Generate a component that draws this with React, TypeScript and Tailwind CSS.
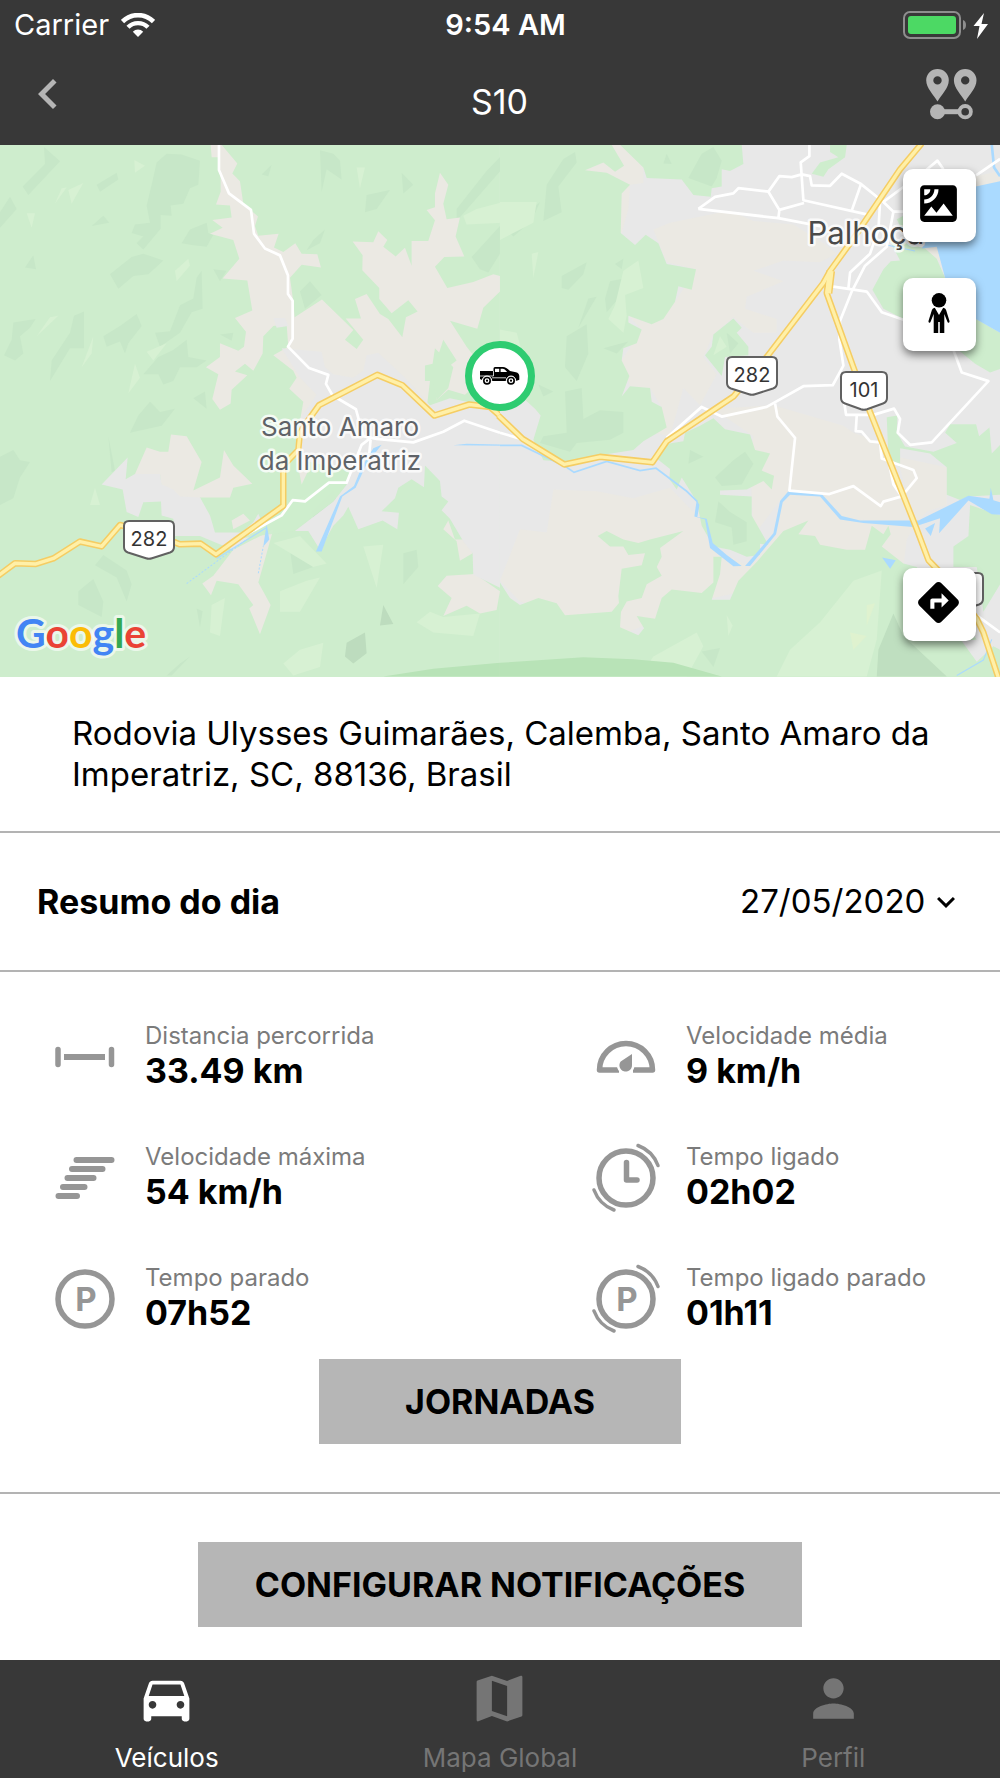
import React from 'react'
import {
  MdChevronLeft,
  MdDirections,
  MdDirectionsCar,
  MdExpandMore,
  MdMap,
  MdPerson,
  MdSatellite,
} from 'react-icons/md'

const FOREST = '#ceedcd'
const RURAL = '#ebe9e3'
const URBAN = '#e8e8e8'
const WATER = '#aadaff'

function StatusBar() {
  return (
    <div className="grid h-12 grid-cols-3 items-center pt-0.5 pr-[11px] pl-[14px] text-[29px] leading-[34px]">
      <div className="flex items-center gap-3">
        <span>Carrier</span>
        <svg className="h-6 w-[34px]" viewBox="0 0 34 24" fill="none" stroke="#fff">
          <path d="M1.5 8.5a22 22 0 0 1 31 0" strokeWidth="4.6" />
          <path d="M7 14.2a14.2 14.2 0 0 1 20 0" strokeWidth="4.4" />
          <path d="M17 24l-5.2-5.3a7.4 7.4 0 0 1 10.4 0z" fill="#fff" stroke="none" />
        </svg>
      </div>
      <span className="pl-2 text-center font-semibold">9:54 AM</span>
      <svg className="h-7 w-[86px] justify-self-end" viewBox="0 0 86 28">
        <rect x="1" y="1" width="56" height="26" rx="6" fill="none" stroke="#8e8e8e" strokeWidth="2" />
        <rect x="5" y="5" width="48" height="18" rx="3" fill="#4cd964" />
        <path d="M60 9q3 1 3 5t-3 5z" fill="#8e8e8e" />
        <path d="M81 2 70.500 15h6L74 28 85 13h-6.500z" fill="#fff" />
      </svg>
    </div>
  )
}

function Header() {
  return (
    <header className="bg-[#383838] text-white">
      <StatusBar />
      <div className="grid h-[97px] grid-cols-3 items-start pr-[23px] pl-[22px] pt-4">
        <button type="button" aria-label="Voltar" className="-ml-1 justify-self-start text-[#b5b5b5]">
          <MdChevronLeft size={60} />
        </button>
        <h1 className="pt-[17px] text-center text-[34px] leading-[41px]">S10</h1>
        <button type="button" aria-label="Trajetos" className="justify-self-end pt-[5px]">
          <svg className="h-[51px] w-[51px]" viewBox="0 0 51 51" fill="#b5b5b5">
            <path fillRule="evenodd" d="M11.500 0a11.300 11.300 0 0 1 11.300 11.300c0 8-7.500 14.500-11.300 21.200C7.700 25.800.2 19.300.2 11.300A11.300 11.300 0 0 1 11.500 0zm0 7.200a4.200 4.200 0 1 0 0 8.400 4.200 4.200 0 0 0 0-8.400z" />
            <path fillRule="evenodd" d="M39.200 0a11.300 11.300 0 0 1 11.300 11.300c0 8-7.500 14.500-11.300 21.200-3.800-6.700-11.300-13.200-11.300-21.200A11.300 11.300 0 0 1 39.200 0zm0 7.200a4.200 4.200 0 1 0 0 8.400 4.200 4.200 0 0 0 0-8.400z" />
            <circle cx="11.500" cy="42.700" r="7.500" />
            <path d="M15 40.200h18v5H15z" />
            <circle cx="39.200" cy="42.700" r="5.700" fill="none" stroke="#b5b5b5" strokeWidth="3.800" />
          </svg>
        </button>
      </div>
    </header>
  )
}

function Shield({ x, y, width = 52, label }: { x: number; y: number; width?: number; label: string }) {
  const half = width / 2
  return (
    <g transform={`translate(${x} ${y})`}>
      <path
        d={`M${6 - half} 1H${half - 6}q5 0 5 5V27q0 4-4 5.500L3 38.300Q0 39.300-3 38.300L${5 - half} 32.500q-4-1.500-4-5.500V6q0-5 5-5z`}
        fill="#fff"
        stroke="#616161"
        strokeWidth="2"
      />
      <text y="26" textAnchor="middle" fontSize="20" fill="#333">{label}</text>
    </g>
  )
}

function WestTerrain() {
  return (
    <g transform="translate(0 -5) scale(0.3333 0.3444)">
      <path fill={FOREST} d="M0 14H1500V1560H0z" />
      <g fill="#c7e7c8">
        <path d="M470 65 500 40 545 42 600 60 595 130 570 140 550 185 512 190 515 220 482 218 482 258 430 318 410 300 430 280 395 270 405 245 450 240 440 190 455 130z" />
        <path d="M330 390 395 340 430 330 490 350 445 390 400 395 355 432z" />
        <path d="M132 20 180 62 85 160 68 135 135 70zM30 165 50 200 0 255V210zM290 130 350 95 355 115 300 150z" />
        <path d="M545 300 570 260 620 240 625 270 640 275 620 310 575 305zM605 380 608 490 575 500 540 560 480 600 465 560 510 555 540 480 580 460 590 400z" />
        <path d="M222 510 252 498V605H210L150 700 155 640 210 560zM40 530 107 520 90 545 60 570 70 620 45 640 12 625 35 580z" />
        <path d="M310 570 360 540 410 505 425 540 385 590 375 620 360 585 320 600zM475 630 520 610 560 580 565 630 620 640 590 660 540 660 520 700 490 710 475 680 430 680z" />
        <path d="M415 800 450 760 480 790 525 780 485 830 390 850zM580 750 615 730 620 780zM325 860 345 960 335 965z" />
        <path d="M0 920 40 900 60 930 90 935 60 980 40 1040 0 1060zM75 370 100 335 108 375zM275 250 310 220 328 240z" />
        <path d="M785 100 815 72 805 105zM960 30 1000 40 1020 60 1025 115 980 85 965 150zM1100 160 1170 145 1130 200 1095 210zM1205 95 1240 130 1210 155z" />
        <path d="M1370 200 1460 90 1510 40V80L1420 180 1370 235zM940 290 975 260 960 300 920 320zM1415 340 1500 250V330L1465 385 1440 375z" />
        <path d="M935 1080 1000 1020 1015 1060 950 1130zM310 1205 380 1250 395 1290 380 1340 350 1270 285 1235zM235 1310 280 1275 310 1340 305 1385 235 1350z" />
        <path d="M870 1190 940 1240 880 1260zM1210 1200 1250 1190 1255 1240 1210 1290zM590 1360 608 1368 600 1415zM540 1520 570 1500 515 1555H500zM660 565 700 560 695 583z" />
        <path d="M900 440 930 410 965 450 915 490zM640 375 680 380 660 410z" />
      </g>
      <g fill="#d7f1d3">
        <path d="M165 185 185 140 200 138zM80 213H105L95 255zM403 58 435 75 405 95zM205 145 250 125 235 150 215 185zM245 660 280 570 275 620zM525 380 565 345 570 365 530 410z" />
        <path d="M150 515 175 510 110 570zM440 615 500 590 460 640zM405 650 420 690 385 735zM1070 80H1095L1080 140zM1390 220 1430 200 1510 180V240L1400 245z" />
        <path d="M840 1310 920 1280 960 1270 900 1370H840zM820 1170 900 1150 980 1230 940 1240zM1250 1400 1290 1370 1330 1385 1440 1375 1420 1440 1300 1430z" />
        <path d="M900 1480 970 1460 960 1530 880 1555 850 1520zM1090 1180 1150 1175 1130 1300zM285 1010 300 1060H270zM635 1350 675 1330 660 1440 630 1430z" />
      </g>
      <path fill="#bddcbe" d="M1150 1350 1180 1405 1140 1410zM1040 1460 1095 1430 1100 1490 1060 1520 1035 1500z" />
      <g fill={RURAL}>
        <path d="M632 14H665L712 68 697 97 720 120 730 185 774 222 765 250 775 278 836 272 822 312 850 325 886 300 905 330 952 332 963 370 905 362 870 400 880 470 884 515 966 463 1060 552 1035 580 1070 607 1090 580 1037 518H1083L1065 462 1100 447 1140 505 1165 520 1207 573 1218 515 1253 498 1225 465 1175 503 1138 462V430L1087 378 1088 335 1058 295 1120 297 1135 265 1162 290 1150 310 1187 338 1215 313 1235 365V293H1285L1305 233 1280 203 1305 195V155L1320 95 1345 130 1330 185 1340 230 1380 225 1367 280 1393 338 1333 340 1305 368 1342 430 1420 412 1480 390 1500 395V440L1450 487 1432 548 1350 525 1400 600 1440 650V700L1395 740 1345 725 1310 755 1305 700H1275V655L1298 650V603L1350 655 1370 640 1330 580 1290 700 1280 780 920 790 905 850 925 960 905 1000 885 900 910 760 868 722 890 690 880 670 820 625 865 600 860 535 820 540 790 570 788 620 760 670 735 650 705 672 742 683 695 725 692 765 660 783 637 752 655 680 618 660 660 630V590L715 612 732 600 738 557 705 517 757 495 742 408 668 402 718 345 700 290 630 272 668 255 637 232 695 225 690 190 648 187 662 150V110L655 50 635 50z" />
        <path d="M440 893 480 905H505L513 855 560 860 605 935 580 1018 660 980 672 900 700 945 757 998 700 1010 690 1038H600L625 1095 560 1110 490 1050 480 970 405 970z" />
        <path d="M700 1190 820 1130 800 1200 775 1285 812 1350 780 1435 748 1360 760 1350 715 1290 650 1280 633 1322 607 1288 640 1265zM695 1105 730 1085 750 1105 700 1130z" />
        <path d="M1345 1105 1365 1160 1400 1160 1418 1200 1380 1222 1370 1165 1330 1130zM1313 1295 1340 1265 1425 1260 1500 1310 1490 1365 1440 1375 1400 1352 1330 1382 1355 1330z" />
      </g>
      <path fill={FOREST} d="M1305 605 1360 660 1345 720 1310 755 1300 700H1275V655L1298 650z" />
      <g fill={URBAN}>
        <path d="M845 605 965 615 975 660 1000 680 1060 690 1090 670 1100 625 1135 618 1170 650 1215 690 1290 770 1350 750 1500 780V1300L1420 1262 1418 1200 1390 1165 1350 1100 1325 1075 1345 1050 1325 1035 1320 990 1275 945 1272 1008 1235 985 1195 1010 1185 1040 1145 1078 1197 1082 1192 1130 1148 1105 1075 1130 1045 1065 1030 1090 1000 1120 960 1190 925 1135 885 1135 1000 1050 1040 1000 1050 960 905 930 900 810 950 740 900 690z" />
        <path d="M383 922 377 985 405 970H480L485 1000 520 1015 540 1035 600 1038 630 1090 645 1140H725L760 1110 775 1085 790 1120 700 1190 650 1170 600 1150H525L520 1100 485 1090 483 1050 430 1052 415 1095 380 1080 368 1015 305 1000z" />
        <path d="M820 517H855L865 540 830 545z" />
      </g>
      <path fill={FOREST} d="M860 1060 1000 990 1040 1000 1000 1050 880 1135 700 1160 850 1080z" opacity=".9" />
      <path fill="#b8e3b7" d="M1150 1558 1300 1535 1500 1518V1558z" />
      <g fill={WATER}>
        <path d="M948 1195H965L1027 1035 1067 1010 1100 940 1145 885 1120 895 1085 950 1062 1005 1020 1035zM800 1115 808 1160 790 1180zM1360 886 1400 882 1500 884V888z" />
      </g>
      <g fill="none" stroke={WATER} strokeWidth="3">
        <path d="M560 1288 740 1160M775 1258 790 1180" strokeDasharray="6 5" />
        <path d="M650 1215 800 1125" />
      </g>
      <g fill="none" stroke="#fff" strokeWidth="8" strokeLinejoin="round">
        <path d="M657 14V87L687 155 753 203 762 272 795 315 840 335 864 393V447L878 467V577L864 600 927 662 985 682 978 708 998 742 1068 782 1090 860 1130 868 1240 878 1330 847 1393 815 1500 850" />
        <path d="M1112 865 1085 885 1040 995H987L915 1049 878 1046 845 1090 740 1145M1112 870 1108 910" />
      </g>
      <g fill="none" strokeLinejoin="round">
        <path stroke="#f5cd63" strokeWidth="19" d="M-5 1265 45 1229 108 1231 160 1215 240 1166 305 1180 360 1118 450 1140 540 1174 602 1172 648 1203 705 1163 850 1062V945L895 900 900 850 920 820 957 770 1132 682 1207 712 1303 800 1408 768 1470 775 1505 805" />
        <path stroke="#fff0a8" strokeWidth="10" d="M-5 1265 45 1229 108 1231 160 1215 240 1166 305 1180 360 1118 450 1140 540 1174 602 1172 648 1203 705 1163 850 1062V945L895 900 900 850 920 820 957 770 1132 682 1207 712 1303 800 1408 768 1470 775 1505 805" />
      </g>
    </g>
  )
}

function EastTerrain() {
  return (
    <g transform="translate(500 -5) scale(0.3334 0.3444)">
      <path fill={URBAN} d="M0 14H1500V1560H0z" />
      <g fill={RURAL}>
        <path d="M255 88 310 65 330 14 365 14 430 80 430 125 390 130 385 200 365 270z" />
        <path d="M460 260 510 240 690 205 760 235 880 245 970 300 1010 330 960 355 850 350 760 380 850 410 740 455 735 490 830 520V560H760L700 515 640 565 610 630 650 680 600 770 550 720 510 860 460 850 485 775 450 720 390 715 365 640 425 550 385 510 455 535 525 470 588 375 500 355z" />
        <path d="M160 1015 290 1020 400 1040 510 1010 600 1100 630 1180 740 1235 830 1140 845 1040 960 1035 1030 1100 1250 1110 1220 1160 1210 1240 1100 1230 640 1330 380 1430 190 1380 60 1340 0 1280 60 1130 140 1140z" />
        <path d="M640 780 820 770 1030 830 1060 850 1150 880 1200 1010 1300 1060 1250 1110 1030 1100 960 1035 845 1040 760 1150 750 930 760 860z" />
        <path d="M1427 105 1500 90V125L1427 135zM1265 320 1305 300 1325 355zM1190 920 1340 950V1060L1240 1090z" />
      </g>
      <g fill={FOREST}>
        <path d="M0 14H335L372 75 345 92 310 65 255 88 320 95 390 130 365 155 362 270 405 305 437 275 475 300 500 360 588 375 575 435 535 425 525 470 490 520 455 535 385 510V530L425 550 410 590 370 605 365 640 388 685 365 745 390 715 450 720 455 760 485 775 500 835 430 875 400 900 300 915 200 935 130 930 100 870 122 800 105 780 0 690z" />
        <path d="M360 14H725L730 70 690 90 665 85V135L635 140 632 165 580 160 545 115 440 110 430 80zM990 14H1040L1035 50 985 85 970 107 935 98 960 65 1015 50 990 35z" />
        <path d="M700 518 725 545 710 560 745 600V625L675 630 665 685 615 625 635 600 640 565z" />
        <path d="M640 808 675 840 750 855 765 900 810 910 785 960 822 975 815 1015 790 990 740 1015 660 1018V1030L755 1035V1090L805 1175 780 1172V1205L740 1210 690 1190 640 1180 605 1120 590 1050 545 980 530 1015 508 985 510 955 470 925 485 885 550 875 555 850 600 830z" />
        <path d="M1165 285 1275 315 1310 345 1335 400 1210 520 1150 490 1117 435 1150 375 1172 352 1200 350zM1190 230 1210 220V270zM1428 520 1500 560V665L1470 675 1425 650 1375 610z" />
        <path d="M1350 825H1428L1437 860 1468 835 1475 910 1500 885V1030L1405 1035 1380 1045 1340 1030V950L1290 910 1200 895V950L1165 920 1160 805 1192 800 1190 850 1215 890 1300 905 1370 880 1335 850z" />
        <path d="M1410 1060 1500 1090V1290L1450 1370 1430 1240H1360V1180L1405 1150z" />
        <path d="M293 1150 320 1135 370 1160 415 1170 450 1160 550 1135 480 1185 485 1210 470 1240 485 1265 440 1290 425 1330 380 1340 360 1375 355 1325 365 1245 425 1235 435 1200 385 1205 370 1180H330z" />
        <path d="M0 1285 30 1330 60 1350 115 1330 170 1345 195 1380 335 1370 365 1335 360 1415 415 1438 432 1418 410 1382 465 1390 485 1330 515 1305 605 1315 640 1285V1210H665L660 1260 635 1335H690L715 1280 770 1225 850 1135 925 1105 895 1145 945 1150 960 1175 1040 1190H1095L1115 1120 1150 1145 1165 1120 1172 1145 1145 1180 1210 1230 1250 1240 1430 1450 1385 1455 1430 1515 1480 1470 1500 1480V1560H0z" />
      </g>
      <g fill="#c7e7c8">
        <path d="M190 55 225 35 230 65 175 135 185 210 130 235 140 130zM20 260 120 180 95 235 40 280zM605 40 640 20 665 60 650 110 635 135 565 110z" />
        <path d="M185 395 260 355 250 390 205 435 185 430zM330 410 383 400 355 460 320 500 315 460zM265 460 290 455 235 545zM200 570 260 535 265 620 230 700 195 660z" />
        <path d="M310 605 385 585 350 620zM345 360 370 345 365 375zM500 40 515 70 490 68zM195 730 245 720 250 810 300 785 370 790V850L330 870 230 880 210 905 120 880 130 860 200 850z" />
        <path d="M115 710 160 730 130 745zM645 980 700 930 735 905 760 940 725 1000 665 1005zM570 900 610 920 565 940zM655 1050 690 1080 740 1110V1165L700 1175 695 1125 645 1110zM680 560 715 590 690 620z" />
        <path d="M605 1485 660 1475 640 1530z" />
      </g>
      <g fill="#d7f1d3">
        <path d="M370 380 415 350 430 430 375 450 380 510 370 560 325 520 345 480zM0 550 50 560 70 630 0 600zM0 180H110L100 240 0 290zM660 570 680 600 640 625z" />
        <path d="M870 1480 960 1400 1060 1280 1145 1250 1130 1450 1100 1558H830zM460 1500 590 1430 610 1470 560 1558H420zM95 330 115 325 100 400zM680 1380 698 1410 685 1440z" />
      </g>
      <path fill="#dff2cf" d="M1100 1350 1125 1345 1100 1410zM1050 1430 1100 1440 1060 1480z" />
      <path fill="#bfdfc0" d="M1180 1375 1210 1440 1340 1558H1130L1135 1480z" />
      <path fill="#b8e3b7" d="M0 1518 250 1502 400 1508 520 1518 665 1558H0z" />
      <g fill={WATER}>
        <path d="M1427 135 1500 120V560L1427 520 1335 400 1310 310 1265 315 1280 290zM1275 1128 1305 1112 1292 1150zM1146 1212 1187 1220 1170 1245z" />
        <path d="M590 1045 598 1060 592 1095 620 1100 638 1170 680 1205 725 1237 700 1238 630 1185 615 1102 583 1093z" />
        <path d="M735 1237H750L828 1145 848 1052 870 1030 960 1035 1020 1102 1090 1112 1240 1124 1320 1098 1317 1142 1405 1047 1475 1087 1500 1088V1052L1480 1046 1472 1010 1468 1042 1405 1033 1255 1105H1080L1025 1092 965 1028 865 1020 840 1048 820 1142z" />
      </g>
      <g fill="none" stroke={WATER} strokeWidth="5">
        <path d="M0 887H65L200 950 222 965 320 933 420 960 468 953 560 1020 592 1050" />
        <path d="M1370 1555 1450 1510 1475 1450M1160 305 1245 322" strokeWidth="3" />
        <path d="M1475 14 1482 80 1500 105" strokeWidth="8" />
      </g>
      <g fill="none" stroke="#fff" strokeWidth="8" strokeLinejoin="round">
        <path d="M928 14V47L902 65 910 175 1110 218M595 200 645 165 700 155 715 140 805 150 838 105 875 108 905 100 930 105 935 132 990 133 1025 98 1083 128 1150 180 1180 208H1215" />
        <path d="M595 200 835 227 838 203 805 150M838 203 912 183M835 227 960 250M1083 128 1055 205M1150 180 1275 90 1312 60 1330 85M1428 103 1500 55" />
        <path d="M1140 180 1135 260 1110 330 1050 385 1045 430M1180 208 1160 310 1095 365 1055 440 1020 525 1018 580 1030 655 998 712 910 715 800 775 665 803 605 775 500 865" />
        <path d="M995 425 1100 440 1145 500 1210 522 1360 610 1385 675 1465 700 1295 878 1230 885 1193 850 1200 810 1182 780 1120 798H1038L1032 760" />
        <path d="M1070 800 1067 845 1085 847 1110 875 1140 878 1145 925 1240 958 1250 982 1205 1035 1150 1050 1142 1063 1060 1005 988 1028 868 1018 885 865 832 803 825 765M1165 930 1180 1000 1205 1035" />
        <path d="M0 850 70 870M1430 1380 1500 1430" />
      </g>
      <g fill="none" strokeLinejoin="round">
        <g stroke="#f5cd63" strokeWidth="19">
          <path d="M-5 800 68 868 193 942 300 920 457 936 500 875 700 745 800 630 970 415 990 380 1050 300 1200 85 1265 10" />
          <path d="M990 380 980 445 1060 660 1110 790 1250 1130 1285 1220 1330 1265 1430 1390 1450 1430 1495 1562" />
          <path d="M992 380 984 445" strokeWidth="26" />
        </g>
        <g stroke="#fff0a8" strokeWidth="10">
          <path d="M-5 800 68 868 193 942 300 920 457 936 500 875 700 745 800 630 970 415 990 380 1050 300 1200 85 1265 10" />
          <path d="M990 380 980 445 1060 660 1110 790 1250 1130 1285 1220 1330 1265 1430 1390 1450 1430 1495 1562" />
          <path d="M992 380 984 445" strokeWidth="17" />
        </g>
      </g>
    </g>
  )
}

function VehicleMarker() {
  return (
    <g transform="translate(500 231)">
      <circle r="31.500" fill="#fff" stroke="#2ecc71" strokeWidth="7" />
      <path d="M-20-5h13.500v-2.500Q-6.500-9-5-9H3Q6-9 10-5l6 1.200q3.300.8 3.300 4v3.500L16 5H-16L-20 3z" />
      <path d="M-5-7.200h4.200V-4H-5zM.6-7.200H3q1.600 0 4.200 3.200H.6z" fill="#fff" />
      <path d="M-20 0h13.500v-5M-8 1.800H6" fill="none" stroke="#fff" strokeWidth=".8" />
      <g fill="#fff" stroke="#fff">
        <circle cx="-13" cy="4.700" r="4.700" />
        <circle cx="11" cy="4.700" r="4.700" />
      </g>
      <g fill="#fff" stroke="#000" strokeWidth="1.600">
        <circle cx="-13" cy="4.700" r="3.200" />
        <circle cx="11" cy="4.700" r="3.200" />
      </g>
      <circle cx="-13" cy="4.700" r="1.100" />
      <circle cx="11" cy="4.700" r="1.100" />
    </g>
  )
}

function MapButton({ label, children }: { label: string; children: React.ReactNode }) {
  return (
    <button
      type="button"
      aria-label={label}
      className="flex size-[73px] items-center justify-center rounded-[10px] bg-white pr-0.5 pb-1 text-black shadow-[0_4px_8px_rgba(0,0,0,0.5)]"
    >
      {children}
    </button>
  )
}

function VehicleMap() {
  return (
    <section className="relative h-[532px] overflow-hidden" aria-label="Mapa">
      <svg
        className="h-full w-full"
        viewBox="0 0 1000 532"
        preserveAspectRatio="xMidYMid slice"
        fontFamily="Inter, 'Liberation Sans', sans-serif"
      >
        <WestTerrain />
        <EastTerrain />
        <g stroke="#fff" strokeOpacity=".8" strokeWidth="5" strokeLinejoin="round" paintOrder="stroke" textAnchor="middle">
          <text x="340" y="291" fontSize="26" fill="#5f6368">Santo Amaro</text>
          <text x="340" y="325" fontSize="26" fill="#5f6368">da Imperatriz</text>
          <text x="866" y="99" fontSize="31" fill="#4a4a4a">Palhoça</text>
        </g>
        <Shield x={149} y={375} label="282" />
        <Shield x={752} y={211} label="282" />
        <Shield x={864} y={226} width={48} label="101" />
        <Shield x={958} y={427} label="" />
        <text
          x="16"
          y="503"
          fontSize="41"
          fontWeight="700"
          fontFamily="Lato, sans-serif"
          stroke="#fff"
          strokeOpacity=".6"
          strokeWidth="6"
          strokeLinejoin="round"
          paintOrder="stroke"
        >
          <tspan fill="#4285f4">G</tspan>
          <tspan fill="#ea4335">o</tspan>
          <tspan fill="#fbbc05">o</tspan>
          <tspan fill="#4285f4">g</tspan>
          <tspan fill="#34a853">l</tspan>
          <tspan fill="#ea4335">e</tspan>
        </text>
        <VehicleMarker />
      </svg>
      <div className="absolute inset-y-0 right-6 flex flex-col justify-between pt-6 pb-9">
        <div className="flex flex-col gap-9">
          <MapButton label="Satélite">
            <MdSatellite size={49} />
          </MapButton>
          <MapButton label="Street View">
            <svg className="h-10 w-[22px]" viewBox="0 0 22 40">
              <circle cx="11" cy="7.300" r="7.300" />
              <path d="M6.800 14.800 11 22l4.200-7.200q2.300.3 2.900 2.200L21.500 28q.3 1.300-.7 1.700-1 .2-1.400-.9L16.300 21V40h-4.500V29h-1.600V40H5.700V21L2.600 28.800q-.4 1.100-1.400.9-1-.4-.7-1.700L3.900 17q.6-1.900 2.900-2.200z" />
            </svg>
          </MapButton>
        </div>
        <MapButton label="Rotas">
          <MdDirections size={49} />
        </MapButton>
      </div>
    </section>
  )
}

function StatIcon({ children }: { children: React.ReactNode }) {
  return (
    <svg className="size-20 shrink-0" viewBox="0 0 80 80" fill="none" stroke="#969696" strokeLinecap="round">
      {children}
    </svg>
  )
}

function RunningArcs() {
  return (
    <path d="M52 8.500A34 34 0 0 1 72 28.500M28 73A34 34 0 0 1 8 53" strokeWidth="3.500" />
  )
}

function ParkingSign() {
  return (
    <>
      <circle cx="40" cy="41" r="27" strokeWidth="5.500" />
      <text x="41" y="53" textAnchor="middle" fontSize="33" fontWeight="700" fill="#969696" stroke="none">P</text>
    </>
  )
}

const STATS = [
  {
    label: 'Distancia percorrida',
    value: '33.49 km',
    icon: (
      <>
        <path d="M13 33.500v15M66.500 33.500v15" strokeWidth="5.500" />
        <path d="M19 41h41" strokeWidth="6" strokeLinecap="butt" />
      </>
    ),
  },
  {
    label: 'Velocidade média',
    value: '9 km/h',
    icon: (
      <>
        <path d="M33 54H13.500A26.500 26.500 0 0 1 66.500 54H47" strokeWidth="5.500" strokeLinecap="butt" strokeLinejoin="round" />
        <path d="M46 38v11a6.300 6.300 0 1 1-11.300-3.500z" fill="#969696" stroke="#fff" strokeWidth="5" paintOrder="stroke" />
      </>
    ),
  },
  {
    label: 'Velocidade máxima',
    value: '54 km/h',
    icon: <path d="M31.500 23H66.500M27 32H57.500M22.500 41H48.500M18 50H39.500M13.500 59H32" strokeWidth="6" />,
  },
  {
    label: 'Tempo ligado',
    value: '02h02',
    icon: (
      <>
        <RunningArcs />
        <circle cx="40" cy="41" r="27" strokeWidth="5.500" />
        <path d="M40.500 25.500V43H51" strokeWidth="5.500" strokeLinejoin="round" />
      </>
    ),
  },
  { label: 'Tempo parado', value: '07h52', icon: <ParkingSign /> },
  {
    label: 'Tempo ligado parado',
    value: '01h11',
    icon: (
      <>
        <RunningArcs />
        <ParkingSign />
      </>
    ),
  },
]

function ActionButton({ className, children }: { className: string; children: React.ReactNode }) {
  return (
    <button type="button" className={`mx-auto block bg-[#b6b6b6] py-[22px] text-[34px] leading-[41px] font-bold ${className}`}>
      {children}
    </button>
  )
}

const TABS = [
  { label: 'Veículos', Icon: MdDirectionsCar, active: true },
  { label: 'Mapa Global', Icon: MdMap, active: false },
  { label: 'Perfil', Icon: MdPerson, active: false },
]

export default function App() {
  return (
    <div className="flex min-h-screen flex-col bg-white font-[Inter,'Liberation_Sans',sans-serif] text-black">
      <Header />
      <VehicleMap />

      <main className="flex-1 text-[33px] leading-[41px]">
        <p className="border-b-2 border-[#b3b3b3] py-9 pr-12 pl-[72px]">
          Rodovia Ulysses Guimarães, Calemba, Santo Amaro da Imperatriz, SC, 88136, Brasil
        </p>

        <div className="flex items-center justify-between border-b-2 border-[#b3b3b3] py-12 pr-9 pl-[37px]">
          <label htmlFor="day" className="text-[34px] leading-[41px] font-bold">Resumo do dia</label>
          <div className="relative flex items-center">
            <select id="day" className="appearance-none bg-transparent pr-[38px]" defaultValue="27/05/2020">
              <option>27/05/2020</option>
            </select>
            <MdExpandMore size={36} className="pointer-events-none absolute right-0" />
          </div>
        </div>

        <div className="border-b-2 border-[#b3b3b3] pt-11 pb-12">
          <dl className="grid grid-cols-[541fr_459fr] gap-y-[41px]">
            {STATS.map(({ label, value, icon }) => (
              <div key={label} className="flex items-center gap-5 pl-[45px]">
                <StatIcon>{icon}</StatIcon>
                <div>
                  <dt className="text-[24px] leading-[29px] text-[#7b7b7b]">{label}</dt>
                  <dd className="text-[34px] leading-[41px] font-bold">{value}</dd>
                </div>
              </div>
            ))}
          </dl>
          <ActionButton className="mt-[21px] w-[362px]">JORNADAS</ActionButton>
        </div>

        <div className="pt-12 pb-[33px]">
          <ActionButton className="w-[604px]">CONFIGURAR NOTIFICAÇÕES</ActionButton>
        </div>
      </main>

      <nav className="grid grid-cols-3 bg-[#383838] pt-2 pb-1">
        {TABS.map(({ label, Icon, active }) => (
          <a
            key={label}
            href="#"
            className={`flex flex-col items-center gap-[13px] text-[26px] leading-8 ${active ? 'text-white' : 'text-[#757575]'}`}
          >
            <Icon size={61} />
            {label}
          </a>
        ))}
      </nav>
    </div>
  )
}
